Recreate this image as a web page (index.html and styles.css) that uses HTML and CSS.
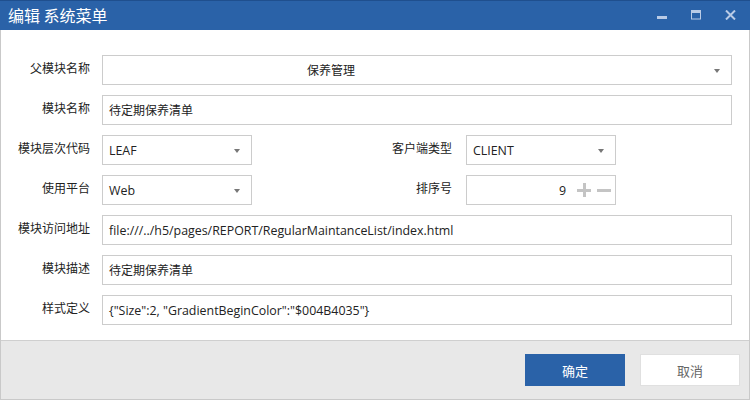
FILE: index.html
```html
<!DOCTYPE html>
<html lang="zh-CN">
<head>
<meta charset="utf-8">
<title>编辑 系统菜单</title>
<link rel="stylesheet" href="styles.css">
</head>
<body>
<div class="window">
  <div class="titlebar">
    <span class="title">编辑 系统菜单</span>
    <div class="controls">
      <svg class="ctl" width="10" height="10" viewBox="0 0 10 10"><rect x="0" y="6" width="10" height="3" fill="#b9cbe6"/></svg>
      <svg class="ctl" width="10" height="10" viewBox="0 0 10 10"><rect x="0.5" y="0.5" width="9" height="8.5" fill="none" stroke="#b9cbe6" stroke-width="1"/><rect x="0" y="0" width="10" height="3" fill="#b9cbe6"/></svg>
      <svg class="ctl" width="11" height="10" viewBox="0 0 11 10"><path d="M1 0.5 L10 9.5 M10 0.5 L1 9.5" stroke="#b9cbe6" stroke-width="2"/></svg>
    </div>
  </div>
  <div class="form">
    <div class="row">
      <label class="lbl">父模块名称</label>
      <div class="box select parent">保养管理<span class="caret"></span></div>
    </div>
    <div class="row">
      <label class="lbl">模块名称</label>
      <div class="box">待定期保养清单</div>
    </div>
    <div class="row half">
      <label class="lbl">模块层次代码</label>
      <div class="box select latin">LEAF<span class="caret"></span></div>
      <label class="lbl">客户端类型</label>
      <div class="box select latin">CLIENT<span class="caret"></span></div>
    </div>
    <div class="row half">
      <label class="lbl">使用平台</label>
      <div class="box select latin">Web<span class="caret"></span></div>
      <label class="lbl">排序号</label>
      <div class="box spinner latin"><span class="num">9</span><span class="plus"></span><span class="minus"></span></div>
    </div>
    <div class="row">
      <label class="lbl">模块访问地址</label>
      <div class="box latin">file:///../h5/pages/REPORT/RegularMaintanceList/index.html</div>
    </div>
    <div class="row">
      <label class="lbl">模块描述</label>
      <div class="box">待定期保养清单</div>
    </div>
    <div class="row">
      <label class="lbl">样式定义</label>
      <div class="box latin">{"Size":2, "GradientBeginColor":"$004B4035"}</div>
    </div>
  </div>
  <div class="footer">
    <button class="btn primary">确定</button>
    <button class="btn">取消</button>
  </div>
</div>
</body>
</html>
```
FILE: styles.css
```css
* { box-sizing: border-box; }
html, body { margin: 0; padding: 0; background: #fff; }
body {
  font-family: "Open Sans", "Noto Sans CJK SC", sans-serif;
  font-size: 12px;
  color: #222;
}
.window {
  width: 750px;
  height: 400px;
  display: flex;
  flex-direction: column;
  border: 1px solid #c9c9c9;
  border-top: none;
}
.titlebar {
  height: 30px;
  background: #2a62a8;
  border-top: 1px solid #1f4f8e;
  margin: 0 -1px;
  display: flex;
  align-items: center;
  justify-content: space-between;
  padding: 0 14px 0 8px;
}
.title {
  color: #fff;
  font-family: "Noto Sans CJK SC", sans-serif;
  font-size: 16px;
  line-height: 20px;
  margin-top: -2px;
}
.controls {
  display: flex;
  align-items: center;
  gap: 24px;
  margin-top: -1px;
}
.ctl { display: block; }
.form {
  flex: 1;
  padding: 25px 17px 0 0;
  display: flex;
  flex-direction: column;
  gap: 10px;
}
.row {
  display: grid;
  grid-template-columns: 89px 1fr;
  column-gap: 12px;
  height: 30px;
}
.row.half {
  grid-template-columns: 89px 150px 190px 150px;
}
.lbl {
  text-align: right;
  font-family: "Noto Sans CJK SC", sans-serif;
  font-size: 12px;
  line-height: 16px;
  padding-top: 5px;
  color: #222;
}
.row.half .lbl:nth-of-type(2) { padding-right: 2px; }
.box {
  border: 1px solid #cccccc;
  background: #fff;
  height: 30px;
  display: flex;
  align-items: center;
  padding: 0 7px 0 6px;
  white-space: nowrap;
  position: relative;
}
.box.latin { font-size: 12.4px; }
.box.parent { padding-left: 204px; }
.select { padding-right: 24px; }
.caret {
  position: absolute;
  right: 11px;
  top: 13px;
  width: 0;
  height: 0;
  border-left: 3.5px solid transparent;
  border-right: 3.5px solid transparent;
  border-top: 4px solid #777;
}
.spinner { justify-content: flex-end; padding-right: 4px; }
.num { margin-right: 5px; }
.plus, .minus {
  position: relative;
  width: 14px;
  height: 14px;
  margin-left: 6px;
}
.plus::before, .minus::before {
  content: "";
  position: absolute;
  left: 0;
  top: 6px;
  width: 14px;
  height: 3px;
  background: #c4c4c4;
}
.plus::after {
  content: "";
  position: absolute;
  left: 6px;
  top: 0;
  width: 3px;
  height: 14px;
  background: #c4c4c4;
}
.footer {
  height: 59px;
  background: #e8e8e8;
  border-top: 1px solid #cfcfcf;
  display: flex;
  justify-content: flex-end;
  align-items: flex-start;
  gap: 15px;
  padding: 13px 9px 0 0;
}
.btn {
  width: 100px;
  height: 32px;
  border: 1px solid #e0e0e0;
  background: #fff;
  color: #666;
  font-family: "Noto Sans CJK SC", sans-serif;
  font-size: 13px;
  padding: 0;
}
.btn.primary {
  background: #2a62a8;
  border-color: #2a62a8;
  color: #fff;
}
```
